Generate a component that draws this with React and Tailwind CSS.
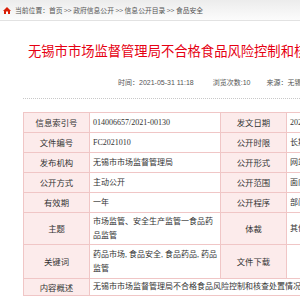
import React from 'react';

const cjk = { fontFamily: '"Noto Sans CJK SC", "Liberation Sans", sans-serif' };
const serif = { fontFamily: '"Liberation Serif", "Noto Sans CJK SC", serif' };

function HomeIcon() {
  return (
    <svg width="8" height="7" viewBox="0 0 8 7" className="shrink-0">
      <path d="M4 0 L8 4 L7 4 L7 7 L1 7 L1 4 L0 4 Z" fill="#d81e06" />
      <path d="M3 4.5 h2 v2.5 h-2 z" fill="#fff" />
    </svg>
  );
}

const Label = ({ children, rowSpan }) => (
  <td
    rowSpan={rowSpan}
    className="border border-[#f0c6c6] bg-[#fcebeb] text-center text-[8.4px] text-[#333] align-middle"
    style={cjk}
  >
    {children}
  </td>
);

const Value = ({ children, colSpan }) => (
  <td
    colSpan={colSpan}
    className="border border-[#f0c6c6] bg-white px-[3px] text-[8px] leading-[13.3px] text-[#333] align-middle whitespace-normal overflow-hidden"
    style={serif}
  >
    {children}
  </td>
);

export default function App() {
  return (
    <div className="w-[300px] h-[300px] overflow-hidden bg-white">
      <div className="w-[700px]">
        {/* breadcrumb */}
        <div
          className="h-[21px] flex items-center gap-[4px] pl-[3px] bg-gradient-to-b from-[#ececec] to-[#fcfcfc] border-b border-[#e2e2e2] text-[6.8px] text-[#555]"
          style={cjk}
        >
          <HomeIcon />
          <span>当前位置：首页 &gt;&gt; 政府信息公开 &gt;&gt; 信息公开目录 &gt;&gt; 食品安全</span>
        </div>

        {/* title */}
        <div
          className="pl-[28px] pt-[22px] text-[13.3px] leading-[16px] text-[#e60012] whitespace-nowrap"
          style={cjk}
        >
          无锡市市场监督管理局不合格食品风险控制和核查处置情况通报
        </div>

        {/* meta */}
        <div
          className="mt-[19px] pl-[118px] flex text-[7px] leading-[10px] text-[#555] whitespace-nowrap"
          style={{ fontFamily: '"Liberation Sans", "Noto Sans CJK SC", sans-serif' }}
        >
          <span>时间：2021-05-31 11:18</span>
          <span className="ml-[19px]">浏览次数:10</span>
          <span className="ml-[16px]">来源：无锡市市场监督管理局</span>
        </div>

        <div className="ml-[23px] mt-[10px] border-t border-dotted border-[#c8c8c8]" />

        {/* info table */}
        <table className="ml-[23px] mt-[13px] border-collapse table-fixed w-[393px]">
          <colgroup>
            <col className="w-[66px]" />
            <col className="w-[131px]" />
            <col className="w-[66px]" />
            <col className="w-[130px]" />
          </colgroup>
          <tbody>
            <tr className="h-[20px]">
              <Label>信息索引号</Label>
              <Value>014006657/2021-00130</Value>
              <Label>发文日期</Label>
              <Value>2021-05-31</Value>
            </tr>
            <tr className="h-[20px]">
              <Label>文件编号</Label>
              <Value>FC2021010</Value>
              <Label>公开时限</Label>
              <Value>长期公开</Value>
            </tr>
            <tr className="h-[20px]">
              <Label>发布机构</Label>
              <Value>无锡市市场监督管理局</Value>
              <Label>公开形式</Label>
              <Value>网站</Value>
            </tr>
            <tr className="h-[20px]">
              <Label>公开方式</Label>
              <Value>主动公开</Value>
              <Label>公开范围</Label>
              <Value>面向社会</Value>
            </tr>
            <tr className="h-[20px]">
              <Label>有效期</Label>
              <Value>一年</Value>
              <Label>公开程序</Label>
              <Value>部门编制</Value>
            </tr>
            <tr className="h-[32px]">
              <Label>主题</Label>
              <Value>市场监管、安全生产监管一食品药品监管</Value>
              <Label>体裁</Label>
              <Value>其他</Value>
            </tr>
            <tr className="h-[34px]">
              <Label>关键词</Label>
              <Value>
                <span className="whitespace-nowrap">药品市场, 食品安全, 食品药品, 药品</span>
                <br />
                监管
              </Value>
              <Label>文件下载</Label>
              <Value></Value>
            </tr>
            <tr className="h-[17px]">
              <Label>内容概述</Label>
              <Value colSpan={3}>
                <span className="whitespace-nowrap">无锡市市场监督管理局不合格食品风险控制和核查处置情况通报</span>
              </Value>
            </tr>
          </tbody>
        </table>
      </div>
    </div>
  );
}
